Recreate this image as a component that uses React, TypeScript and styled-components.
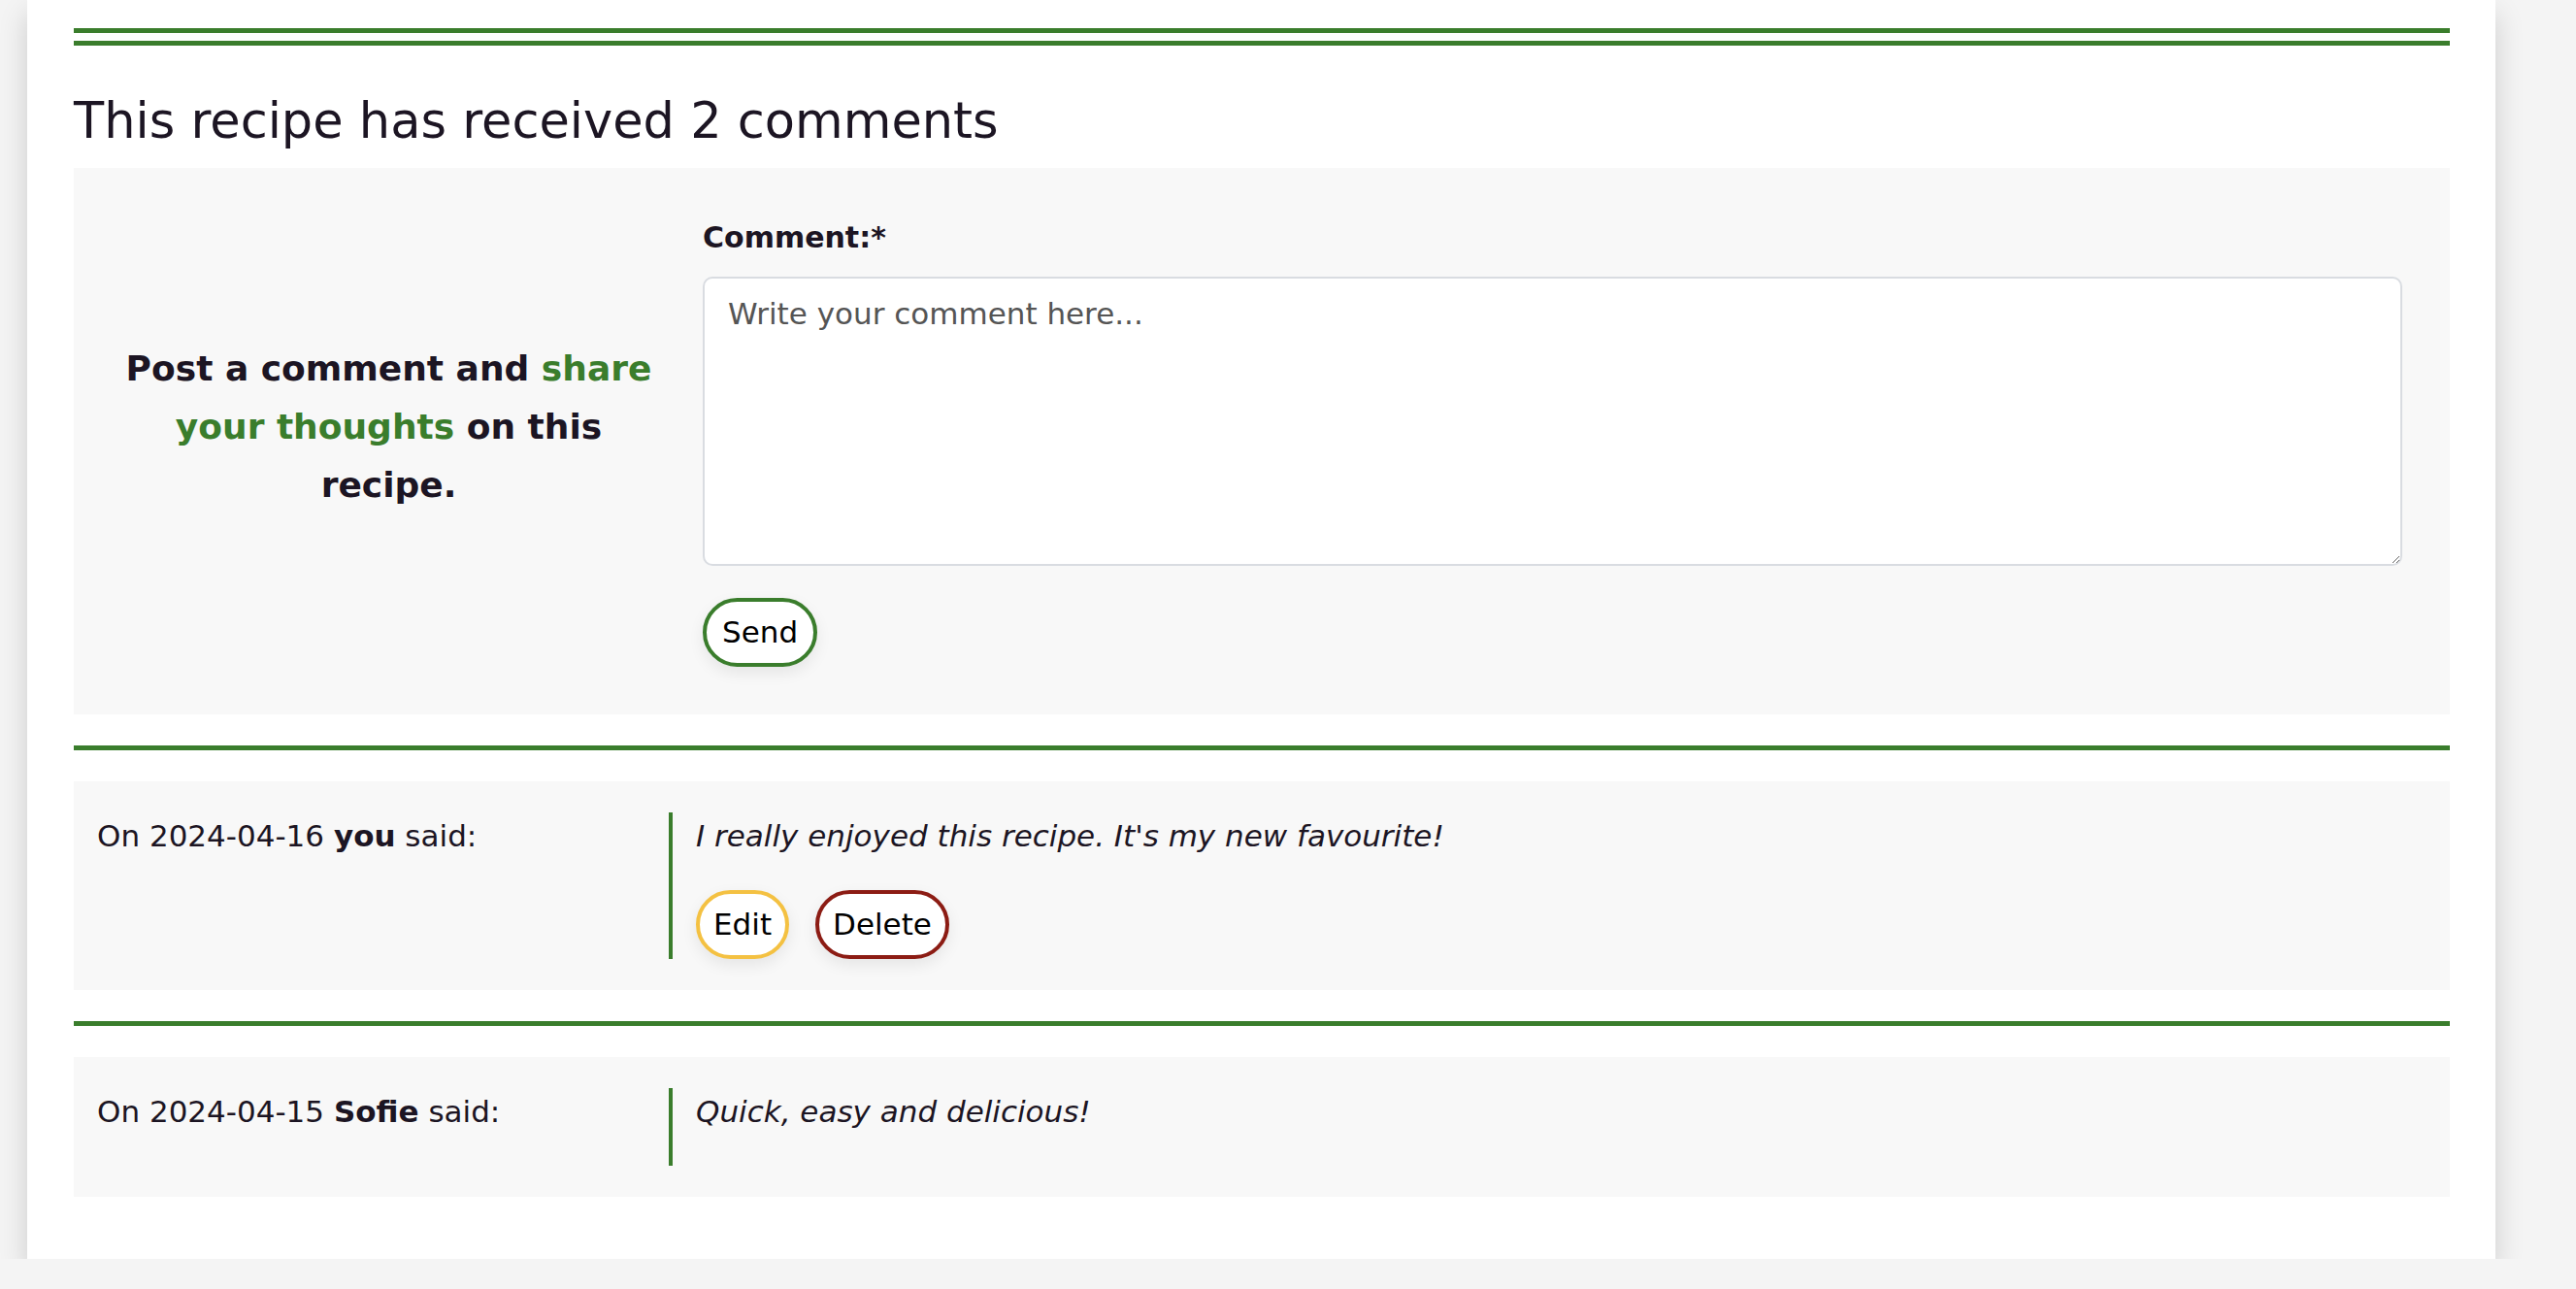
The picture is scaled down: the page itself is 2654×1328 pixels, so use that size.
import React from 'react';
import styled, { createGlobalStyle } from 'styled-components';

const green = '#3a7d2c';
const ink = '#1c1523';

const GlobalStyle = createGlobalStyle`
  html, body {
    margin: 0;
    padding: 0;
    background-color: #f4f4f4;
  }
  body {
    font-family: "DejaVu Sans", "Noto Sans", sans-serif;
    color: ${ink};
  }
  * {
    box-sizing: border-box;
  }
`;

const Card = styled.section`
  margin-left: 28px;
  width: 2543px;
  padding: 29px 47px 64px 48px;
  background-color: #fff;
  box-shadow: 0 14px 28px rgba(0, 0, 0, 0.16);
`;

const DoubleRule = styled.div`
  height: 18px;
  border-top: 5px solid ${green};
  border-bottom: 5px solid ${green};
`;

const Rule = styled.hr`
  margin: 32px 0;
  height: 5px;
  border: none;
  background-color: ${green};
`;

const Heading = styled.h2`
  margin: 47px 0 18px;
  font-size: 51px;
  font-weight: 400;
  line-height: 61px;
`;

const FormBox = styled.div`
  display: grid;
  grid-template-columns: 551px 1fr;
  column-gap: 48px;
  align-items: center;
  padding: 48px 49px 49px;
  background-color: #f8f8f8;
`;

const Invite = styled.p`
  margin: 0 0 28px;
  text-align: center;
  font-size: 36px;
  font-weight: 700;
  line-height: 60px;
`;

const Accent = styled.span`
  color: ${green};
`;

const CommentForm = styled.form`
  display: flex;
  flex-direction: column;
  align-items: flex-start;
`;

const Label = styled.label`
  font-size: 30px;
  font-weight: 700;
  line-height: 48px;
  margin-bottom: 16px;
`;

const TextArea = styled.textarea`
  width: 100%;
  height: 298px;
  padding: 12px 24px;
  border: 2px solid #d9dce1;
  border-radius: 10px;
  background-color: #fff;
  font-family: inherit;
  font-size: 31px;
  line-height: 48px;
  color: ${ink};
  outline: none;

  &::placeholder {
    color: #555;
  }
`;

const PillButton = styled.button<{ $tone: string }>`
  padding: 8px 14px;
  border: 4px solid ${(p) => p.$tone};
  border-radius: 999px;
  background-color: #fff;
  box-shadow: 0 6px 16px rgba(0, 0, 0, 0.08);
  font-family: inherit;
  font-size: 31px;
  line-height: 47px;
  color: #000;
  cursor: pointer;
`;

const SendButton = styled(PillButton)`
  margin-top: 33px;
  padding: 8px 16px;
`;

const CommentBox = styled.article`
  display: grid;
  grid-template-columns: 589px 1fr;
  padding: 32px 24px;
  background-color: #f8f8f8;
  font-size: 31px;
  line-height: 48px;
`;

const Meta = styled.div``;

const Body = styled.div`
  border-left: 4px solid ${green};
  padding-left: 24px;
`;

const Text = styled.p`
  margin: 0 0 32px;
  font-style: italic;
`;

const Actions = styled.div`
  display: flex;
  gap: 27px;
`;

interface Comment {
  date: string;
  author: string;
  text: string;
  own?: boolean;
}

const comments: Comment[] = [
  { date: '2024-04-16', author: 'you', text: "I really enjoyed this recipe. It's my new favourite!", own: true },
  { date: '2024-04-15', author: 'Sofie', text: 'Quick, easy and delicious!' },
];

const App: React.FC = () => {
  return (
    <>
      <GlobalStyle />
      <Card>
        <DoubleRule />
        <Heading>This recipe has received {comments.length} comments</Heading>
        <FormBox>
          <Invite>
            Post a comment and <Accent>share your thoughts</Accent> on this recipe.
          </Invite>
          <CommentForm onSubmit={(e) => e.preventDefault()}>
            <Label htmlFor="comment">Comment:*</Label>
            <TextArea id="comment" placeholder="Write your comment here..." />
            <SendButton type="submit" $tone={green}>
              Send
            </SendButton>
          </CommentForm>
        </FormBox>
        {comments.map((c) => (
          <React.Fragment key={c.date + c.author}>
            <Rule />
            <CommentBox>
              <Meta>
                On {c.date} <strong>{c.author}</strong> said:
              </Meta>
              <Body>
                <Text>{c.text}</Text>
                {c.own && (
                  <Actions>
                    <PillButton $tone="#f4c142">Edit</PillButton>
                    <PillButton $tone="#8c1c14">Delete</PillButton>
                  </Actions>
                )}
              </Body>
            </CommentBox>
          </React.Fragment>
        ))}
      </Card>
    </>
  );
};

export default App;
